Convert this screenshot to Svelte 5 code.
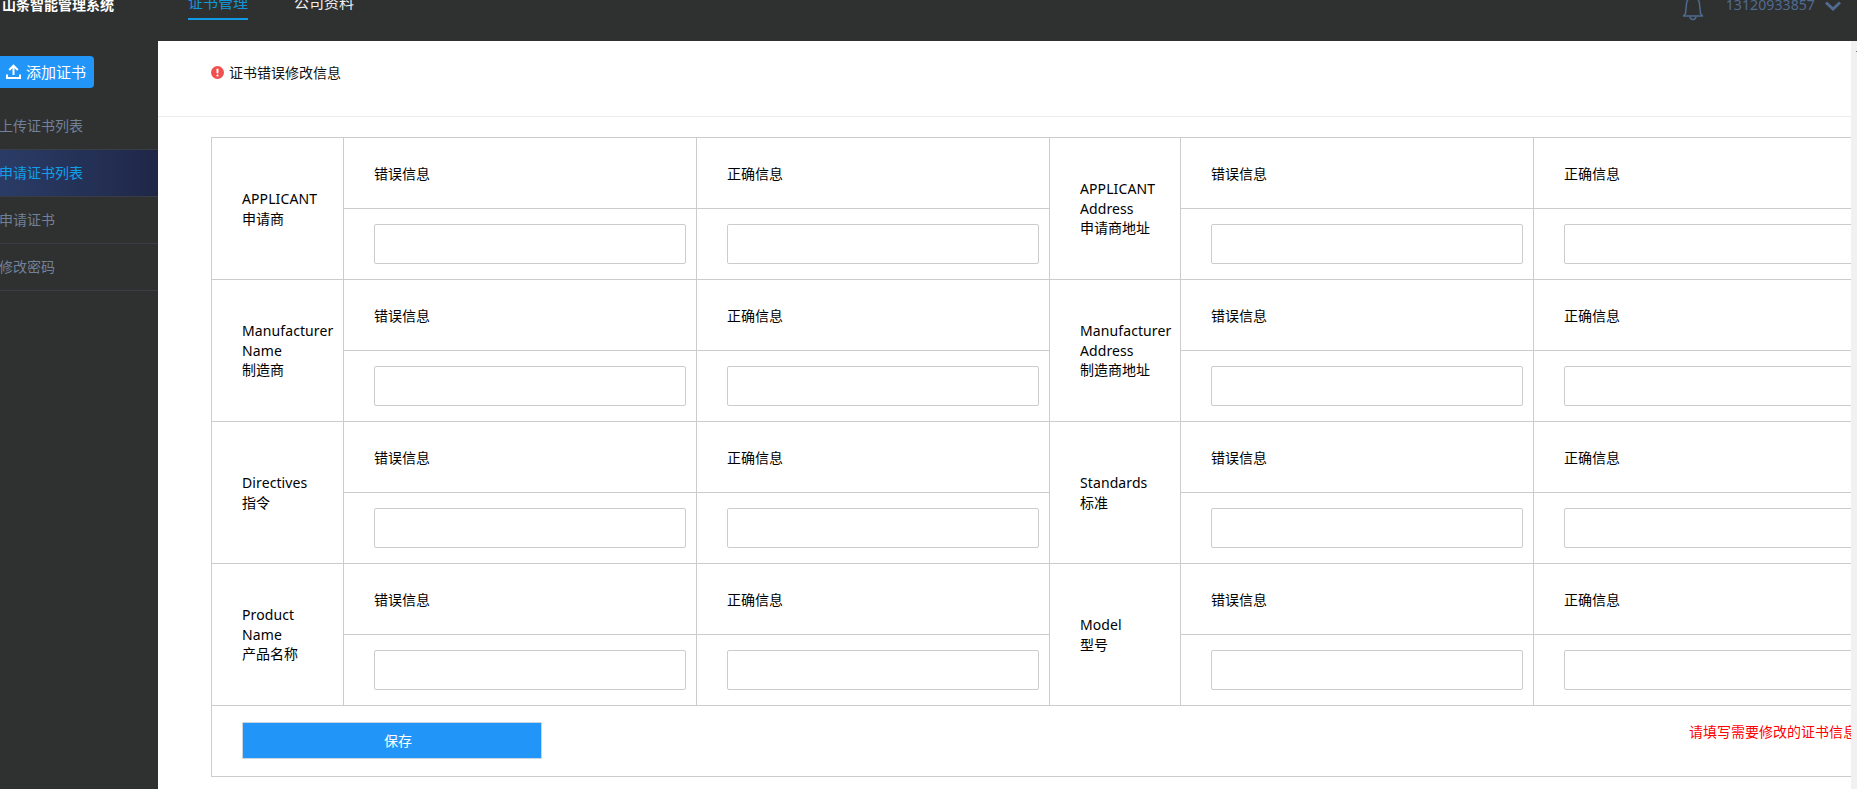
<script>
  const rows = [
    [{ lines: ['APPLICANT'], zh: '申请商' }, { lines: ['APPLICANT', 'Address'], zh: '申请商地址' }],
    [{ lines: ['Manufacturer', 'Name'], zh: '制造商' }, { lines: ['Manufacturer', 'Address'], zh: '制造商地址' }],
    [{ lines: ['Directives'], zh: '指令' }, { lines: ['Standards'], zh: '标准' }],
    [{ lines: ['Product', 'Name'], zh: '产品名称' }, { lines: ['Model'], zh: '型号' }]
  ];
  const menu = ['上传证书列表', '申请证书列表', '申请证书', '修改密码'];
</script>

<div class="page">
  <header class="top">
    <div class="top-row">
      <div class="brand">山条智能管理系统</div>
      <nav class="nav">
        <span class="nav-item active">证书管理</span>
        <span class="nav-item">公司资料</span>
      </nav>
      <div class="user">
        <svg class="bell" width="22" height="24" viewBox="0 0 22 24" fill="none" stroke="#4f6b8f" stroke-width="1.500">
          <path d="M3.500 16.500 L4.500 7a6.500 7 0 0 1 13 0l1 9.500l2 2.500h-19z" stroke-linejoin="round" />
          <path d="M8 19.500a3 3 0 0 0 6 0" />
        </svg>
        <span class="phone">13120933857</span>
        <svg class="chev" width="16" height="10" viewBox="0 0 16 10" fill="none" stroke="#4f6b8f" stroke-width="3">
          <path d="M1 1.500l7 6.500 7-6.500" />
        </svg>
      </div>
    </div>
  </header>

  <div class="body">
    <aside class="side">
      <button class="add">
        <svg width="15" height="15" viewBox="0 0 15 15" fill="none" stroke="#fff" stroke-width="2">
          <path d="M7.500 11V2M3.200 6l4.300-4.300L11.800 6M1 10.500V14h13v-3.500" />
        </svg>
        <span class="add-text">添加证书</span>
      </button>
      <ul class="menu">
        {#each menu as m, i}
          <li class:current={i === 1}>{m}</li>
        {/each}
      </ul>
    </aside>

    <main class="main">
      <div class="title">
        <svg class="warn" width="13" height="13" viewBox="0 0 13 13">
          <circle cx="6.500" cy="6.500" r="6.500" fill="#f0504f" />
          <rect x="5.500" y="2.500" width="2" height="5" rx="1" fill="#fff" />
          <circle cx="6.500" cy="9.500" r="1.100" fill="#fff" />
        </svg>
        <span>证书错误修改信息</span>
      </div>

      <div class="table">
        {#each rows as row}
          <div class="row">
            {#each row as g}
              <div class="label">
                <div>
                  {#each g.lines as l}<div class="latin">{l}</div>{/each}
                  <div>{g.zh}</div>
                </div>
              </div>
              <div class="col">
                <div class="cap">错误信息</div>
                <div class="inp"><input type="text" /></div>
              </div>
              <div class="col">
                <div class="cap">正确信息</div>
                <div class="inp"><input type="text" /></div>
              </div>
            {/each}
          </div>
        {/each}
        <div class="foot">
          <button class="save">保存</button>
          <span class="hint">请填写需要修改的证书信息</span>
        </div>
      </div>
    </main>
    <div class="scroll"><i></i></div>
  </div>
</div>

<style>
  :global(body) {
    margin: 0;
    background: #fff;
  }
  .page {
    width: 1857px;
    height: 789px;
    overflow: hidden;
    display: flex;
    flex-direction: column;
    font-family: "Noto Sans", "Noto Sans CJK SC", sans-serif;
    font-size: 14px;
    color: #111;
    background: #2f3030;
  }
  .top {
    height: 41px;
    flex: none;
    overflow: hidden;
  }
  .top-row {
    display: flex;
    align-items: flex-start;
    height: 40px;
    margin-top: -20px;
  }
  .brand {
    width: 188px;
    padding-left: 2px;
    box-sizing: border-box;
    line-height: 50px;
    font-weight: 700;
    color: #fff;
  }
  .nav {
    display: flex;
    gap: 46px;
  }
  .nav-item {
    height: 40px;
    line-height: 44px;
    font-size: 15px;
    color: #eee;
    box-sizing: border-box;
  }
  .nav-item.active {
    color: #1296db;
    border-bottom: 2px solid #0f9ae6;
  }
  .user {
    margin-left: auto;
    display: flex;
    align-items: flex-start;
    padding-right: 16px;
    color: #4f6b8f;
  }
  .bell {
    margin-top: 17px;
    margin-right: 22px;
    margin-left: -1px;
  }
  .phone {
    line-height: 50px;
    font-size: 14.200px;
    margin-right: 10px;
  }
  .chev {
    margin-top: 21px;
  }
  .body {
    flex: 1;
    display: flex;
    min-height: 0;
  }
  .side {
    width: 158px;
    flex: none;
    padding-top: 15px;
    box-sizing: border-box;
  }
  .add {
    display: flex;
    align-items: center;
    gap: 5px;
    width: 94px;
    height: 32px;
    padding: 0 0 2px 6px;
    border: 0;
    border-radius: 0 4px 4px 0;
    background: #2196f8;
    color: #fff;
    font: inherit;
    font-size: 15px;
  }
  .menu {
    list-style: none;
    margin: 15px 0 0;
    padding: 0;
  }
  .menu li {
    height: 47px;
    box-sizing: border-box;
    line-height: 46px;
    border-bottom: 1px solid #3a3d44;
    color: #708199;
    text-indent: -1px;
    white-space: nowrap;
    overflow: hidden;
  }
  .menu li.current {
    color: #10a0ea;
    background: linear-gradient(90deg, #2a3c66, #1f2748);
  }
  .main {
    flex: 1;
    min-width: 0;
    background: #fff;
    overflow: hidden;
  }
  .title {
    height: 76px;
    box-sizing: border-box;
    border-bottom: 1px solid #e9ecef;
    padding: 0 0 14px 53px;
    display: flex;
    align-items: center;
    gap: 5px;
  }
  .warn {
    margin-top: 1px;
  }
  .table {
    margin: 20px 0 0 53px;
    width: 1680px;
    border: solid #ccc;
    border-width: 1px 0 1px 1px;
    color: #000;
  }
  .row {
    display: grid;
    grid-template-columns: 132px 353px 353px 131px 353px 353px;
    height: 142px;
    border-bottom: 1px solid #ccc;
    box-sizing: border-box;
  }
  .label {
    display: flex;
    align-items: center;
    padding-left: 30px;
    line-height: 19.500px;
    border-right: 1px solid #ccc;
    white-space: nowrap;
  }
  .latin {
    letter-spacing: 0.100px;
  }
  .col {
    display: grid;
    grid-template-rows: 71px 70px;
    border-right: 1px solid #ccc;
  }
  .cap {
    display: flex;
    align-items: center;
    padding-left: 30px;
    border-bottom: 1px solid #ccc;
  }
  .inp {
    padding: 15px 0 0 30px;
  }
  .inp input {
    display: block;
    width: 312px;
    height: 40px;
    box-sizing: border-box;
    border: 1px solid #ccc;
    border-radius: 2px;
    background: #fff;
    outline: none;
  }
  .foot {
    height: 70px;
    display: flex;
    padding-left: 30px;
    box-sizing: border-box;
  }
  .save {
    width: 300px;
    height: 37px;
    margin-top: 16px;
    padding: 0 0 2px 12px;
    border: 1px solid #c9d6e2;
    border-radius: 1px;
    background: #2196f8;
    color: #fff;
    font: inherit;
  }
  .hint {
    margin-left: 1147px;
    margin-top: 16px;
    line-height: 20px;
    color: #f00;
    white-space: nowrap;
  }
  .scroll {
    width: 6px;
    flex: none;
    background: #f1f1f1;
    padding-top: 10px;
    box-sizing: border-box;
  }
  .scroll i {
    display: block;
    width: 1px;
    height: 1px;
    margin-left: 5px;
    background: #777;
  }
</style>
